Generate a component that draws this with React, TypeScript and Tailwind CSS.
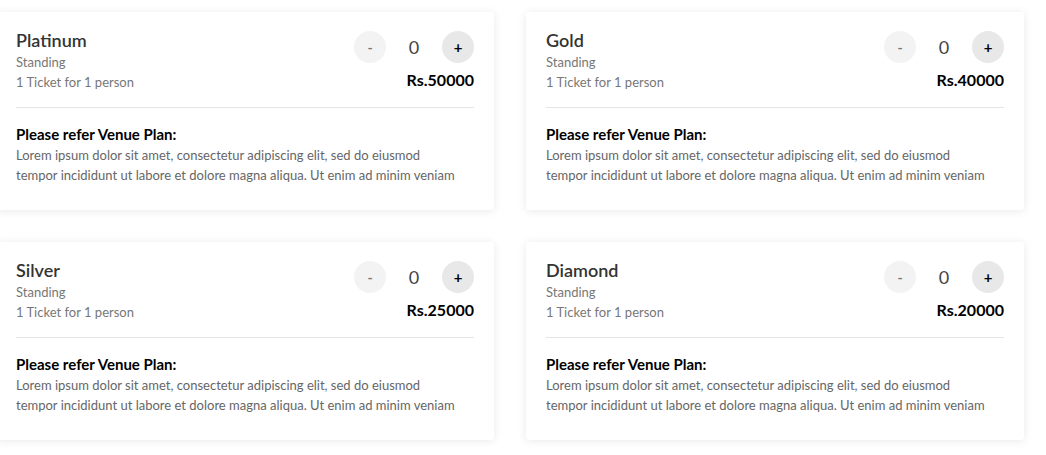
import React from 'react';

interface Ticket {
  name: string;
  price: string;
}

const tickets: Ticket[] = [
  { name: 'Platinum', price: 'Rs.50000' },
  { name: 'Gold', price: 'Rs.40000' },
  { name: 'Silver', price: 'Rs.25000' },
  { name: 'Diamond', price: 'Rs.20000' },
];

function TicketCard({ ticket }: { ticket: Ticket }) {
  return (
    <div className="bg-white rounded-[3px] shadow-[0_1px_10px_rgba(0,0,0,0.09)] px-5 pt-4 pb-[25px]">
      <div className="flex justify-between">
        <div>
          <div className="text-[18px] leading-6 font-semibold text-[#333]">{ticket.name}</div>
          <div className="text-[13px] leading-5 text-[#777]">Standing</div>
          <div className="text-[13px] leading-5 text-[#777]">1 Ticket for 1 person</div>
        </div>
        <div className="flex flex-col items-end pt-[3px]">
          <div className="flex items-center">
            <button className="w-8 h-8 rounded-full bg-[#f3f3f3] text-[#777] text-[14px] font-bold flex items-center justify-center">
              -
            </button>
            <span className="w-14 text-center text-[18px] text-[#444]">0</span>
            <button className="w-8 h-8 rounded-full bg-[#e8e8e8] text-black text-[15px] font-bold flex items-center justify-center">
              +
            </button>
          </div>
          <div className="mt-[7px] text-[16px] leading-5 font-bold text-black">{ticket.price}</div>
        </div>
      </div>

      <div className="mt-[15px] border-t border-[#e5e5e5]" />

      <div className="mt-[16px]">
        <div className="text-[15px] leading-5 font-bold text-black">Please refer Venue Plan:</div>
        <p className="mt-px text-[13px] leading-5 text-[#666] whitespace-nowrap">
          Lorem ipsum dolor sit amet, consectetur adipiscing elit, sed do eiusmod
          <br />
          tempor incididunt ut labore et dolore magna aliqua. Ut enim ad minim veniam
        </p>
      </div>
    </div>
  );
}

export default function App() {
  return (
    <div className="min-h-[455px] bg-white pt-3 font-['Lato',sans-serif]">
      <div className="-ml-1 grid grid-cols-[498px_498px] gap-8">
        {tickets.map((t) => (
          <TicketCard key={t.name} ticket={t} />
        ))}
      </div>
    </div>
  );
}
